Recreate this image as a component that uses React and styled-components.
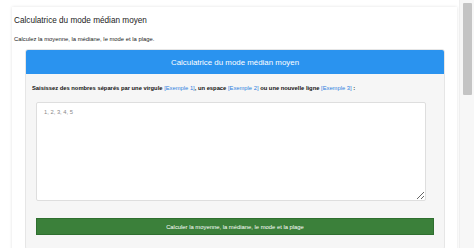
import styled, { createGlobalStyle } from "styled-components";

const GlobalStyle = createGlobalStyle`
  *, *::before, *::after {
    box-sizing: border-box;
  }

  body {
    margin: 0;
    background: #ffffff;
    font-family: "Liberation Sans", Arial, sans-serif;
    color: #222;
  }
`;

const Page = styled.div`
  padding: 7px 17px 20px 12px;
`;

// stands in for the browser's classic scrollbar seen in the capture
const Rail = styled.div`
  position: fixed;
  top: 0;
  right: 0;
  width: 15px;
  height: 100vh;
  background: #f7f7f7;
  border-left: 1px solid #efefef;
  padding: 3px 2px 0 3px;
`;

const Thumb = styled.div`
  height: 92px;
  border-radius: 1px;
  background: #c4c4c4;
`;

const Sheet = styled.div`
  min-height: 640px;
  padding: 7px 2px 10px 2px;
  background: #fff;
  box-shadow: 0 0 3px rgba(0, 0, 0, 0.12);
`;

const Title = styled.h1`
  margin: 0;
  font-size: 8.2px;
  line-height: 14px;
  font-weight: 400;
  color: #222;
`;

const Lead = styled.p`
  margin: 6px 0 0;
  font-size: 5.85px;
  line-height: 10px;
  color: #222;
`;

const Card = styled.section`
  margin: 5px 10px 0 11px;
  border: 1px solid #e6e6e6;
  border-radius: 3px;
  background: #f6f6f6;
  overflow: hidden;
`;

const CardHead = styled.div`
  height: 24px;
  display: flex;
  align-items: center;
  justify-content: center;
  background: #2a93ef;
  color: #fff;
  font-size: 7.9px;
`;

const CardBody = styled.div`
  padding: 9px 10px 14px 6px;
`;

const Label = styled.p`
  margin: 0;
  font-size: 5.8px;
  line-height: 10px;
  font-weight: 700;
  color: #111;
`;

const Ex = styled.a`
  color: #2f7fe0;
  font-weight: 400;
  text-decoration: none;
`;

const Input = styled.textarea`
  display: block;
  width: calc(100% - 12px);
  height: 99px;
  margin: 9px 0 0 4px;
  padding: 5px 7px;
  border: 1px solid #dedede;
  border-radius: 2px;
  background: #fff;
  font-family: "Liberation Sans", Arial, sans-serif;
  font-size: 5.8px;
  line-height: 8px;
  color: #333;

  &::placeholder {
    color: #8a8a8a;
  }
`;

const Submit = styled.button`
  display: flex;
  align-items: center;
  justify-content: center;
  width: calc(100% - 4px);
  height: 17px;
  margin: 17px 0 0 4px;
  padding: 0;
  border: 1px solid #2f6f2f;
  border-radius: 0;
  background: #3b803a;
  color: #fff;
  font-family: "Liberation Sans", Arial, sans-serif;
  font-size: 5.85px;
  cursor: pointer;
`;

export default function App() {
  return (
    <>
      <GlobalStyle />
      <Page>
        <Sheet>
          <Title>Calculatrice du mode médian moyen</Title>
          <Lead>Calculez la moyenne, la médiane, le mode et la plage.</Lead>
          <Card>
            <CardHead>Calculatrice du mode médian moyen</CardHead>
            <CardBody>
              <Label>
                Saisissez des nombres séparés par une virgule{" "}
                <Ex href="#">[Exemple 1]</Ex>, un espace <Ex href="#">[Exemple 2]</Ex> ou une
                nouvelle ligne <Ex href="#">[Exemple 3]</Ex> :
              </Label>
              <Input placeholder="1, 2, 3, 4, 5" />
              <Submit>Calculer la moyenne, la médiane, le mode et la plage</Submit>
            </CardBody>
          </Card>
        </Sheet>
      </Page>
      <Rail>
        <Thumb />
      </Rail>
    </>
  );
}
